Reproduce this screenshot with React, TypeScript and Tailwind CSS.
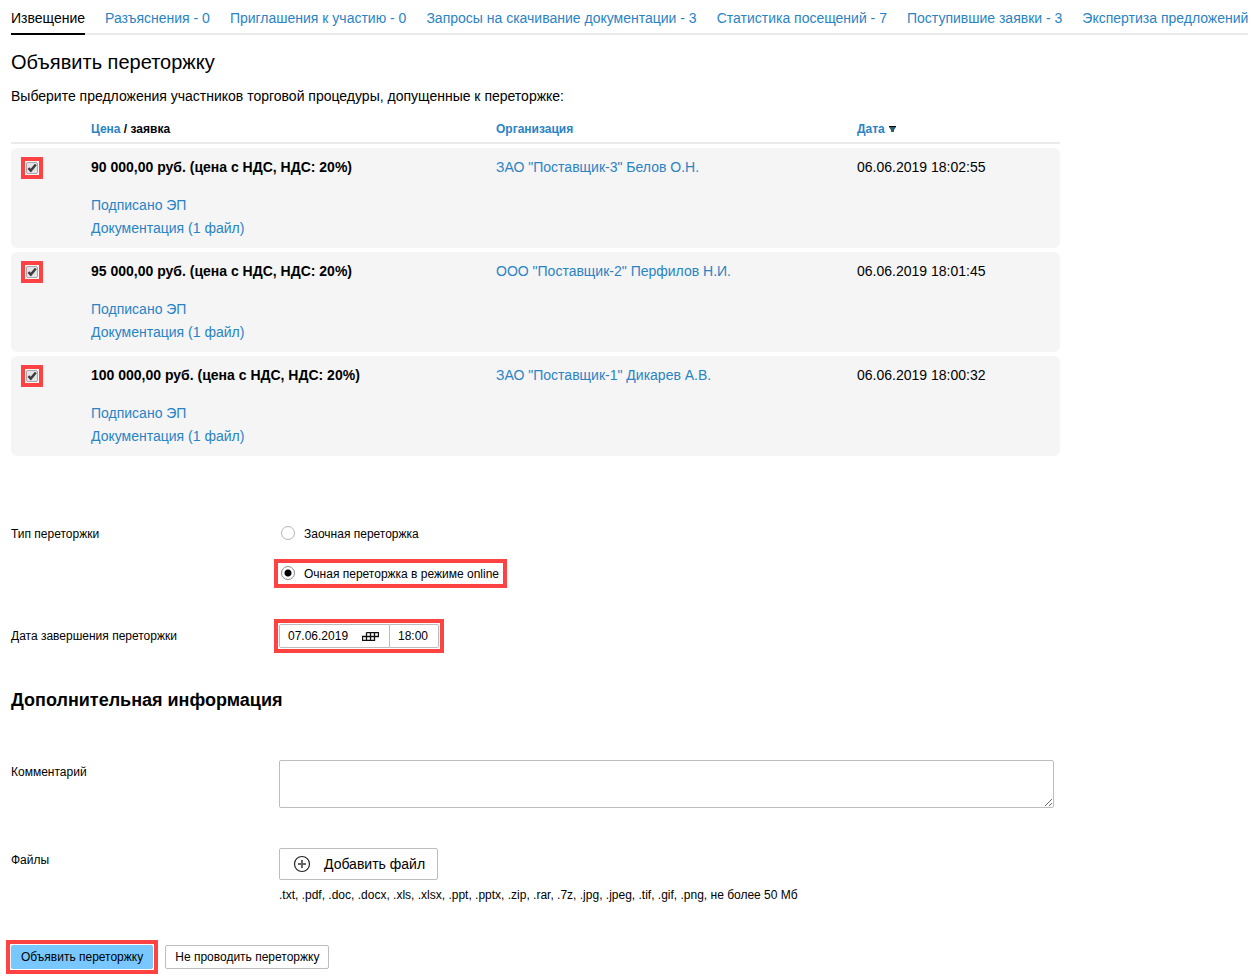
import type { ReactNode } from "react";

const tabs = [
  "Разъяснения - 0",
  "Приглашения к участию - 0",
  "Запросы на скачивание документации - 3",
  "Статистика посещений - 7",
  "Поступившие заявки - 3",
  "Экспертиза предложений",
];

const offers = [
  { price: "90 000,00 руб. (цена с НДС, НДС: 20%)", org: 'ЗАО "Поставщик-3" Белов О.Н.', date: "06.06.2019 18:02:55" },
  { price: "95 000,00 руб. (цена с НДС, НДС: 20%)", org: 'ООО "Поставщик-2" Перфилов Н.И.', date: "06.06.2019 18:01:45" },
  { price: "100 000,00 руб. (цена с НДС, НДС: 20%)", org: 'ЗАО "Поставщик-1" Дикарев А.В.', date: "06.06.2019 18:00:32" },
];

function Link({ children }: { children: ReactNode }) {
  return (
    <a href="#" className="text-[#2a83c5] hover:underline">
      {children}
    </a>
  );
}

function OfferCheckbox({ label }: { label: string }) {
  return (
    <span className="relative block size-3 outline-4 outline-offset-1 outline-[#ff4242]">
      <input
        type="checkbox"
        defaultChecked
        aria-label={label}
        className="peer block size-3 appearance-none rounded-xs border border-[#a9a9a9] bg-[#e4e4e4]"
      />
      <svg viewBox="0 0 12 12" className="pointer-events-none absolute inset-0 hidden size-3 peer-checked:block" aria-hidden="true">
        <path d="M2.4 6.2 L4.8 8.6 L9.8 2.6" fill="none" stroke="#3c3c3c" strokeWidth="2.4" />
      </svg>
    </span>
  );
}

function Radio({ label, checked, marked }: { label: string; checked?: boolean; marked?: boolean }) {
  return (
    <label
      className={
        marked
          ? "-ml-px flex h-[21px] items-start gap-2 pr-1 pl-[3px] outline-4 outline-[#ff4242]"
          : "-ml-px flex h-[21px] items-start gap-2 pr-1 pl-[3px]"
      }
    >
      <input
        type="radio"
        name="rebid-type"
        defaultChecked={checked}
        className="mt-[3px] mr-px size-3.5 appearance-none rounded-full border border-[#b4b4b4] bg-white checked:border-[#8c8c8c] checked:bg-[radial-gradient(circle,#000_0,#000_3px,#fff_4px)]"
      />
      {label}
    </label>
  );
}

export default function App() {
  return (
    <div className="bg-white pr-[9px] pl-[11px] font-['Liberation_Sans',Arial,sans-serif] text-sm text-black">
      <nav className="flex gap-5 overflow-hidden bg-[linear-gradient(#ebebeb,#ebebeb)] bg-[length:100%_2px] bg-bottom bg-no-repeat whitespace-nowrap">
        <a href="#" aria-current="page" className="border-b-2 border-black pt-2 pb-[5px] leading-5">
          Извещение
        </a>
        {tabs.map((t) => (
          <a key={t} href="#" className="pt-2 pb-[5px] leading-5 text-[#2a83c5]">
            {t}
          </a>
        ))}
      </nav>

      <main>
        <h1 className="mt-[15px] text-xl leading-6">Объявить переторжку</h1>
        <p className="mt-3 leading-5">Выберите предложения участников торговой процедуры, допущенные к переторжке:</p>

        <table className="mt-[11px] w-full max-w-[1049px] table-fixed border-separate border-spacing-x-0 border-spacing-y-1 text-left">
          <colgroup>
            <col className="w-20" />
            <col className="w-[405px]" />
            <col className="w-[361px]" />
            <col />
          </colgroup>
          <thead className="text-xs">
            <tr>
              <td className="border-b-2 border-[#ebebeb]" />
              <th className="border-b-2 border-[#ebebeb] pb-[5px]">
                <Link>Цена</Link> / заявка
              </th>
              <th className="border-b-2 border-[#ebebeb] pb-[5px]">
                <Link>Организация</Link>
              </th>
              <th className="border-b-2 border-[#ebebeb] pb-[5px]">
                <span className="flex items-center gap-1">
                  <Link>Дата</Link>
                  <svg viewBox="0 0 7 6" className="h-1.5 w-[7px]" aria-hidden="true">
                    <path d="M0 0h7v1L5 4v2H2V4L0 1z" fill="#2b5f70" />
                    <path d="M0 0h7v1H0z" fill="#000" />
                  </svg>
                </span>
              </th>
            </tr>
          </thead>
          <tbody className="leading-[23px]">
            {offers.map((o) => (
              <tr key={o.price} className="align-top">
                <td className="rounded-l-md bg-[#f5f5f5] pt-3.5 pl-[15px]">
                  <OfferCheckbox label={o.price} />
                </td>
                <td className="bg-[#f5f5f5] py-2">
                  <div className="pb-[15px] font-bold">{o.price}</div>
                  <div>
                    <Link>Подписано ЭП</Link>
                  </div>
                  <div>
                    <Link>Документация (1 файл)</Link>
                  </div>
                </td>
                <td className="bg-[#f5f5f5] py-2">
                  <Link>{o.org}</Link>
                </td>
                <td className="rounded-r-md bg-[#f5f5f5] py-2">{o.date}</td>
              </tr>
            ))}
          </tbody>
        </table>

        <form className="max-w-[1043px] text-xs" onSubmit={(e) => e.preventDefault()}>
          <div role="radiogroup" aria-labelledby="type-label" className="mt-[63px] grid grid-cols-[268px_1fr] leading-[22px]">
            <span id="type-label">Тип переторжки</span>
            <div className="flex flex-col items-start gap-[19px]">
              <Radio label="Заочная переторжка" />
              <Radio label="Очная переторжка в режиме online" checked marked />
            </div>
          </div>

          <div className="mt-10 grid grid-cols-[268px_1fr] leading-6">
            <label htmlFor="end-date">Дата завершения переторжки</label>
            <div className="flex w-40 outline-4 outline-offset-1 outline-[#ff4242]">
              <div className="flex h-6 w-[111px] items-center rounded-l-xs border border-[#bdbdbd] pr-2.5 pl-2">
                <input id="end-date" type="text" defaultValue="07.06.2019" className="w-0 grow outline-none" />
                <button type="button" aria-label="Открыть календарь">
                  <svg viewBox="0 0 17 9" className="block h-[9px] w-[17px]" aria-hidden="true">
                    <path
                      d="M4.5 .5h12v4h-4v4H.5v-4h12M4.5 .5v8M8.5 .5v8M12.5 .5v4"
                      fill="none"
                      stroke="#111"
                      strokeWidth="1.3"
                    />
                  </svg>
                </button>
              </div>
              <input
                type="text"
                aria-label="Время завершения"
                defaultValue="18:00"
                className="h-6 w-0 grow rounded-r-xs border border-l-0 border-[#bdbdbd] px-2 outline-none"
              />
            </div>
          </div>

          <h2 className="mt-10 text-lg leading-6 font-bold">Дополнительная информация</h2>

          <div className="mt-12 grid grid-cols-[268px_1fr] leading-6">
            <label htmlFor="comment">Комментарий</label>
            <textarea id="comment" className="block h-12 w-full rounded-xs border border-[#bdbdbd] px-2 outline-none" />
          </div>

          <div className="mt-10 grid grid-cols-[268px_1fr]">
            <span className="leading-6">Файлы</span>
            <div>
              <button type="button" className="flex h-8 items-center gap-3 rounded-xs border border-[#bdbdbd] px-3 text-sm">
                <svg viewBox="0 0 20 20" className="size-5" aria-hidden="true" fill="none">
                  <circle cx="10" cy="10" r="7.5" stroke="#222" strokeWidth="1.2" />
                  <path d="M10 6v8M6 10h8" stroke="#666" strokeWidth="2" />
                </svg>
                Добавить файл
              </button>
              <p className="mt-[7px] leading-4">
                .txt, .pdf, .doc, .docx, .xls, .xlsx, .ppt, .pptx, .zip, .rar, .7z, .jpg, .jpeg, .tif, .gif, .png, не более 50 Мб
              </p>
            </div>
          </div>

          <div className="mt-[42px] flex gap-3 pb-2.5">
            <div className="outline-4 outline-offset-1 outline-[#ff4242]">
              <button type="submit" className="block h-6 rounded-xs bg-[#78c8ff] px-2.5">
                Объявить переторжку
              </button>
            </div>
            <button type="button" className="h-6 rounded-xs border border-[#bdbdbd] px-[9px]">
              Не проводить переторжку
            </button>
          </div>
        </form>
      </main>
    </div>
  );
}
